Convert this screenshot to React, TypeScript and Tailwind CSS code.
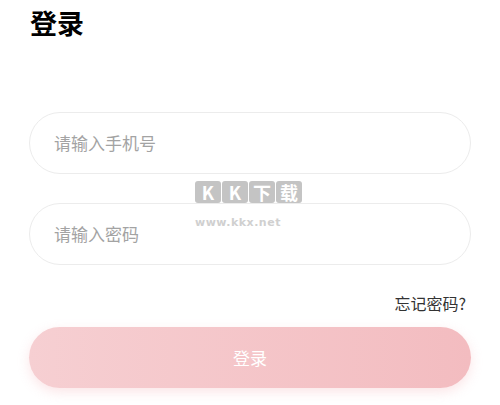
import React from "react";

export default function App() {
  const font = { fontFamily: '"Noto Sans CJK SC", "Noto Sans", sans-serif' };
  return (
    <div className="relative w-[500px] h-[405px] bg-white overflow-hidden" style={font}>
      <div className="pl-[30px] pt-[4px]">
        <h1 className="text-[27px] leading-[38px] font-bold text-black">登录</h1>
      </div>
      <div className="px-[29px] pt-[70px] flex flex-col">
        <div className="h-[62px] rounded-full border border-[#ececec] flex items-center pl-[24px]">
          <span className="text-[17px] text-[#a3a3a3]">请输入手机号</span>
        </div>
        <div className="h-[62px] mt-[29px] rounded-full border border-[#ececec] flex items-center pl-[24px]">
          <span className="text-[17px] text-[#a3a3a3]">请输入密码</span>
        </div>
        <div className="flex justify-end mt-[28px] pr-[5px]">
          <span className="text-[16px] leading-[20px] text-[#333]">忘记密码?</span>
        </div>
        <div className="mt-[14px] h-[61px] rounded-full bg-gradient-to-r from-[#f6cfd2] to-[#f3bcc0] shadow-[0_4px_12px_rgba(242,170,175,0.3)] flex items-center justify-center">
          <span className="text-[17px] text-white">登录</span>
        </div>
      </div>
      <div className="absolute left-[195px] top-[181px] flex flex-col items-start pointer-events-none">
        <div className="flex gap-[1px]">
          {["K", "K", "下", "载"].map((c, i) => (
            <span
              key={i}
              className="w-[26px] h-[22px] bg-[#c4c4c4] text-white text-[18px] leading-[22px] font-bold flex items-center justify-center rounded-[3px]"
            >
              {c}
            </span>
          ))}
        </div>
        <span className="mt-[13px] text-[11px] leading-[14px] font-bold tracking-[0.5px] text-[#d0d0d0]" style={{ fontFamily: '"DejaVu Sans", sans-serif' }}>
          www.kkx.net
        </span>
      </div>
    </div>
  );
}
